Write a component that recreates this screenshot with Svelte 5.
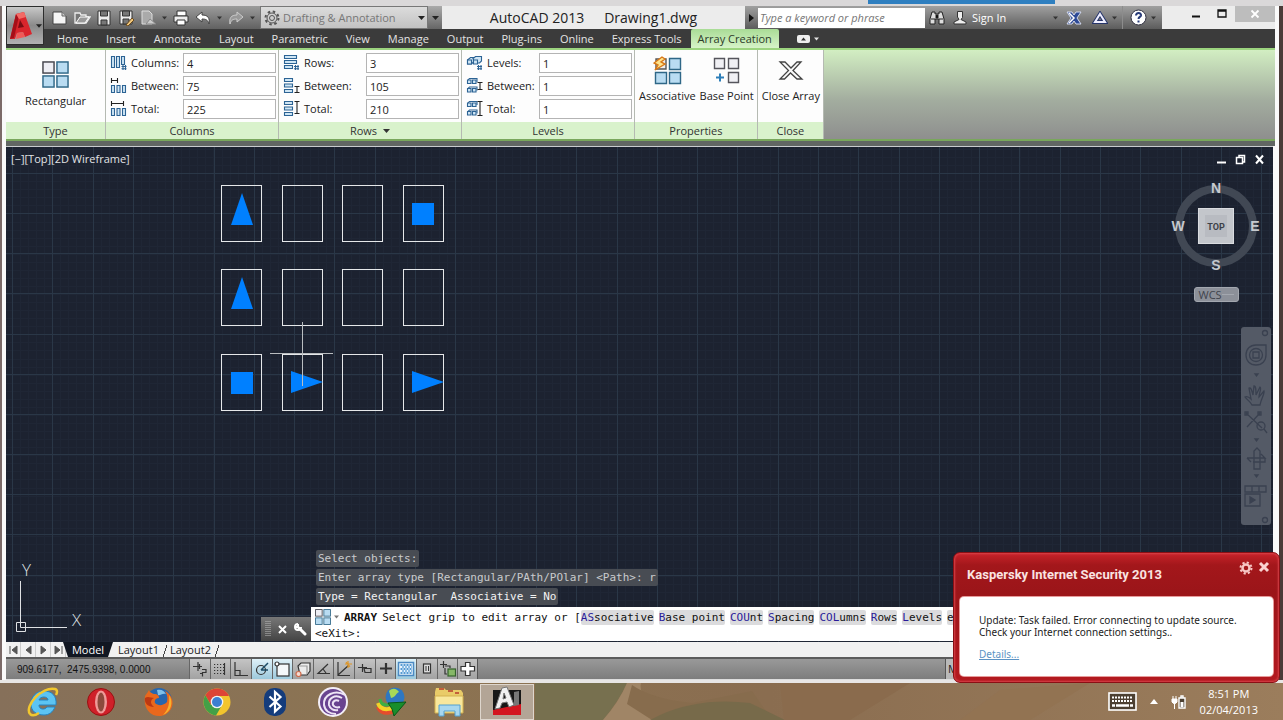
<script lang="ts">
  const tabs = ['Home', 'Insert', 'Annotate', 'Layout', 'Parametric', 'View', 'Manage', 'Output', 'Plug-ins', 'Online', 'Express Tools', 'Array Creation'];

  const panels = [
    {
      title: 'Columns', kind: 'col', menu: false,
      fields: [['Columns:', '4'], ['Between:', '75'], ['Total:', '225']],
    },
    {
      title: 'Rows', kind: 'row', menu: true,
      fields: [['Rows:', '3'], ['Between:', '105'], ['Total:', '210']],
    },
    {
      title: 'Levels', kind: 'lev', menu: false,
      fields: [['Levels:', '1'], ['Between:', '1'], ['Total:', '1']],
    },
  ];

  // grid of the model space
  const step = 40.3;
  const major = Array.from({ length: 60 }, (_, i) => Math.round(6 + i * step) + 0.5);
  const majorY = Array.from({ length: 40 }, (_, i) => Math.round(26 + i * 40.15) + 0.5);
  const minor = Array.from({ length: 300 }, (_, i) => Math.round(6 + (i * step) / 5) + 0.5);
  const minorY = Array.from({ length: 200 }, (_, i) => Math.round(2 + (i * step) / 5) + 0.5);

  const cols = [215, 276, 336, 397];
  const rows = [38, 122, 207];

  const options = [
    ['AS', 'sociative'],
    ['B', 'ase point'],
    ['COU', 'nt'],
    ['S', 'pacing'],
    ['COL', 'umns'],
    ['R', 'ows'],
    ['L', 'evels'],
    ['', 'eXit'],
  ];

  const toggles = ['Infer Constraints', 'Snap Mode', 'Ortho Mode', 'Polar Tracking', 'Object Snap', '3D Object Snap', 'Object Snap Tracking', 'Dynamic UCS', 'Dynamic Input', 'Lineweight', 'Transparency', 'Quick Properties', 'Selection Cycling', 'Annotation Monitor'];
  const active = [3, 4, 10];

  const apps = ['Internet Explorer', 'Opera', 'Firefox', 'Chrome', 'Bluetooth', 'BitTorrent', 'Download Manager', 'File Explorer', 'AutoCAD'];

  let currentTab = $state('Array Creation');
</script>

{#snippet caret()}
  <svg class="caret" width="7" height="4" viewBox="0 0 7 4"><path d="M0 0h7L3.5 4z" fill="currentColor" /></svg>
{/snippet}

{#snippet fieldIcon(kind, n)}
  <svg width="18" height="18" viewBox="0 0 18 18" fill="#cfe6f5" stroke="#2c6394" stroke-width="1.1">
    {#if kind === 'col'}
      {#if n === 0}
        <path d="M1.5 2.5h3v11h-3zM6.5 2.5h3v11h-3zM11.5 2.5h3v8h-3z" />
        <path d="M13 11v5M15.5 11v5M11.5 12.5h5M11.5 14.8h5" fill="none" />
      {:else}
        <path d="M1.5 8.500h3v7h-3zM7 8.500h3v7h-3zM12.500 8.500h3v7h-3z" />
        {#if n === 1}
          <path d="M1.500 1v5M7.500 1v5M2 3.500h5" stroke="#222" fill="none" />
        {:else}
          <path d="M1.500 1v5M13.500 1v5M2 3.500h11" stroke="#222" fill="none" />
        {/if}
      {/if}
    {:else if kind === 'row'}
      {#if n === 0}
        <path d="M1.500 1.500h12v3h-12zM1.500 6.500h12v3h-12zM1.500 11.500h8v3h-8z" />
        <path d="M12.500 11v5M15 11v5M11 12.500h5M11 14.800h5" fill="none" />
      {:else}
        <path d="M1.500 1.500h8v3h-8zM1.500 7h8v3h-8zM1.500 12.500h8v3h-8z" />
        {#if n === 1}
          <path d="M11.500 9.500h5M11.500 15.500h5M14 10v5" stroke="#222" fill="none" />
        {:else}
          <path d="M11.500 1.500h5M11.500 13.500h5M14 2v11" stroke="#222" fill="none" />
        {/if}
      {/if}
    {:else}
      {#if n === 0}
        <path d="M1.500 6l3-2.500h3V8l-2 2h-4zM6.500 5l3-2.500h6V7l-2 2h-3" />
        <path d="M1.500 6h4v4h-4zM7.500 6h4v4h-4z" />
        <path d="M12.500 11v5M15 11v5M11 12.500h5M11 14.800h5" fill="none" />
      {:else}
        <path d="M1.500 3h3.500v3.500h-3.500zM6.500 3h3.500v3.500h-3.500zM1.500 11.500h3.500v3.500h-3.500zM6.500 11.500h3.500v3.500h-3.500z" />
        <path d="M2 2.800L3.500 1.500h7.500V5M2 11.300L3.500 10h7.500v3.500" fill="none" />
        {#if n === 1}
          <path d="M11.500 5.500h5M11.500 12.500h5M14 6v6" stroke="#222" fill="none" />
        {:else}
          <path d="M11.500 1.500h5M11.500 15.500h5M14 2v13" stroke="#222" fill="none" />
        {/if}
      {/if}
    {/if}
  </svg>
{/snippet}

{#snippet arrayIcon(size)}
  <svg width={size} height={size} viewBox="0 0 28 28" fill="#b9dcf2" stroke="#2f6787" stroke-width="1.500">
    <rect x="1" y="1" width="11.500" height="11.500" fill="#eeeef4" stroke="#44444c" />
    <rect x="15.500" y="1" width="11.500" height="11.500" />
    <rect x="1" y="15.500" width="11.500" height="11.500" />
    <rect x="15.500" y="15.500" width="11.500" height="11.500" />
  </svg>
{/snippet}

{#snippet toggleIcon(n)}
  <svg width="18" height="18" viewBox="0 0 18 18" fill="none" stroke="#333" stroke-width="1.200">
    {#if n === 0}
      <path d="M2 6.500h9M7 2v9M8.500 4v5M11 9.500h4v3h-3.500v4M9 13.500h2" />
    {:else if n === 1}
      <path d="M3 4.500h12M3 7.500h12M3 10.500h12M3 13.500h12" stroke-dasharray="1.200 1.800" />
      <path d="M13.500 3v12" />
    {:else if n === 2}
      <path d="M3 2v13.500h13M3 10.500h5v5" />
    {:else if n === 3}
      <circle cx="8" cy="10" r="4.500" />
      <path d="M8 10h7M8 10L15 3" stroke="#1c4b66" stroke-width="1.500" />
    {:else if n === 4}
      <rect x="4" y="4" width="12" height="12" fill="#f4f8fa" />
      <circle cx="4" cy="4" r="2" fill="#fff" />
    {:else if n === 5}
      <path d="M4 6l3-3h9v8l-3 4H6z" fill="#ececec" />
      <path d="M5 6h8v8" stroke="#999" />
      <circle cx="4.500" cy="14" r="2.500" stroke="#cf6c4d" fill="#f3dbd3" />
    {:else if n === 6}
      <path d="M13 4L3 13.500h12M8 9l3 4" />
    {:else if n === 7}
      <path d="M3 2v13.500h12M3 15L14 5" />
      <path d="M13 1v7M10 4h7M11 2l4 5" stroke="#df9524" />
    {:else if n === 8}
      <path d="M2 7.500h9M6.500 4v8M8 8.500h7v4H9z" />
    {:else if n === 9}
      <path d="M3 8.500h12M9 3v11" stroke-width="2.200" />
    {:else if n === 10}
      <rect x="1.500" y="2.500" width="15" height="13" fill="#eaf5fd" stroke="#4b8ac3" stroke-width="1.500" />
      <path d="M3.500 5h11M3.500 9h11M3.500 13h11" stroke="#559ad3" stroke-width="2" stroke-dasharray="2 1" />
      <path d="M5 7h10M5 11h10" stroke="#8cbde4" stroke-width="2" stroke-dasharray="2 1" />
    {:else if n === 11}
      <rect x="5.500" y="4" width="7" height="9" fill="#ddd" />
      <path d="M8 6v5M10.500 6v5" stroke-width="1" />
    {:else if n === 12}
      <path d="M1 4.500h7M4.500 1v7M6 6h5v2M6 8v6h2" />
      <rect x="9" y="9" width="7.500" height="7" fill="#86b867" stroke="#35612c" />
    {:else}
      <path d="M6.500 2.500h4.500v4h4.500v4.500H11v4.500H6.500V11H2V6.500h4.500z" fill="#fff" />
    {/if}
  </svg>
{/snippet}

{#snippet appIcon(n)}
  <svg width="32" height="32" viewBox="0 0 32 32">
    {#if n === 0}
      <path d="M17 5C9 5 4 11 4 18s5 11 13 11c5 0 9-3 11-8h-8c-2 3-8 3-8-2h17C30 10 25 5 17 5zM12 14c1-4 9-4 9 0z" fill="#5cc4f3" stroke="#2384c4" fill-rule="evenodd" />
      <path d="M3 28C-3 20 15 0 28 3c3 1 2 4 1 6M3 28c2 2 6 1 9-1" fill="none" stroke="#f1c72f" stroke-width="2.500" />
    {:else if n === 1}
      <circle cx="16" cy="16" r="13.500" fill="#cf2029" stroke="#911" />
      <ellipse cx="16" cy="16" rx="6" ry="11.500" fill="#ef9a98" />
      <ellipse cx="16" cy="16" rx="3.500" ry="9.500" fill="#8c4a3c" />
    {:else if n === 2}
      <circle cx="16" cy="15" r="13" fill="#2766ad" />
      <path d="M14 4c5-1 7 1 9 4-4-1-6 2-8 1z" fill="#80c0e8" />
      <path d="M2 10C4 7 5 6 6 4c1 3 3 3 5 4 4 0 5 2 5 4-3 0-5 2-4 5 3 3 8 3 12-1 1-5 0-8-2-11 12 6 9 23-4 25C7 31 0 22 2 10z" fill="#e9681c" />
      <path d="M26 9c5 7 2 17-6 20 5-5 7-11 6-20z" fill="#f7b12e" />
      <path d="M2 12c3-2 6 0 9 0-4 2-4 6 0 9-6 0-10-4-9-9z" fill="#bd3812" />
    {:else if n === 3}
      <circle cx="16" cy="16" r="13.500" fill="#f2c52e" />
      <path d="M4.300 9.300A13.500 13.500 0 0 1 28 10H16l-6 9z" fill="#dd4436" />
      <path d="M4.300 9.300A13.500 13.500 0 0 0 15 29.500L21 19l-11 0z" fill="#43a047" />
      <circle cx="16" cy="16" r="6.300" fill="#f3f3f3" />
      <circle cx="16" cy="16" r="5" fill="#3d7fd2" />
    {:else if n === 4}
      <rect x="5" y="2" width="22" height="28" rx="10" fill="#143c7c" />
      <path d="M10.500 10.500l11 10-5.500 5V6l5.500 5-11 10" fill="none" stroke="#fff" stroke-width="2.200" />
    {:else if n === 5}
      <circle cx="16" cy="16" r="15" fill="#f3eef7" />
      <circle cx="16" cy="16" r="13" fill="#694390" />
      <path d="M28 9C18 3 6 9 7 19c1 6 6 9 12 9M25 12c-7-4-14 0-13 7 1 4 5 6 9 5M22 15c-4-2-7 1-6 4 1 2 4 3 7 2" fill="none" stroke="#ede4f5" stroke-width="2" />
    {:else if n === 6}
      <path d="M3 21c3 8 16 8 22-2" fill="none" stroke="#e44d2c" stroke-width="4" />
      <path d="M3 17c3 9 15 8 22-2" fill="none" stroke="#f3d327" stroke-width="4" />
      <path d="M5 13c1 9 13 7 20-1" fill="none" stroke="#3daf42" stroke-width="3" />
      <circle cx="20" cy="11" r="9.500" fill="#2e77c1" />
      <path d="M14 5c4-4 8-2 10 1-3 1-3 5-8 6z" fill="#a8d957" />
      <path d="M13 17l18-1-12 14-2-7z" fill="#188e2c" stroke="#075816" />
    {:else if n === 7}
      <path d="M2 6l1-4h8l2 2h15l2 3v20H2z" fill="#e9cb68" />
      <path d="M6 3h5M15 5h5M22 7h4" stroke="#b63d2c" stroke-width="1.500" />
      <path d="M2 10h28v17H2z" fill="#f8e79c" stroke="#d3b14e" />
      <path d="M6 30V19h21v11h-5v-5H11v5z" fill="#a7d7ef" stroke="#52a0d0" />
    {:else}
      <path d="M2 4h28v25H2z" fill="#181818" />
      <path d="M2 24l28-6v11H2z" fill="#d31620" />
      <path d="M23 6l5-1v14l-5 1z" fill="#777" />
      <path d="M4 23L11 2l5-1 7 18-5 2-2-5-5 1-2 5zM12 13l3-1-2-5z" fill="#f1f1f1" stroke="#777" fill-rule="evenodd" />
    {/if}
  </svg>
{/snippet}

<div class="desktop">
  <div class="peek"></div>
  <div class="window">
    <header>
      <button class="app-button" aria-label="Application menu">
        <svg width="24" height="30" viewBox="0 0 24 30">
          <path d="M1 28L7 3l8-2 8 22-7 3-2-5-6 1-2 6z" fill="#d9252c" />
          <path d="M1 28L7 3l3 2-5 22z" fill="#a50f18" />
          <path d="M7 3l8-2 2 5-7 2z" fill="#f26a65" />
          <path d="M9 17l2-8 4 7z" fill="#7b0c13" />
          <path d="M8 22l6-1 2 5-9 2z" fill="#f05a57" />
        </svg>
        {@render caret()}
      </button>
      <div class="header-rows">
        <div class="titlebar">
          <div class="quick">
            <button aria-label="New"><svg width="18" height="16" viewBox="0 0 18 16"><path d="M2 2h9l4 4v8H2z" fill="#f5f5f5" stroke="#444" /><path d="M11 2v4h4" fill="#ccc" stroke="#666" /></svg></button>
            <button aria-label="Open"><svg width="18" height="16" viewBox="0 0 18 16"><path d="M2 13V3h5l1 2h5v2h4l-4 6z" fill="#777" stroke="#eee" stroke-width="1.300" /><path d="M3 13l4-6h9l-4 6z" fill="#999" stroke="#fff" /></svg></button>
            <button aria-label="Save"><svg width="18" height="16" viewBox="0 0 18 16"><path d="M3 1h12v14H3z" fill="#ececec" stroke="#333" /><path d="M5.500 1h7v5h-7zM6 10h6v5H6z" fill="#777" stroke="#333" /></svg></button>
            <button aria-label="Save As"><svg width="18" height="16" viewBox="0 0 18 16"><path d="M3 1h12v13H3z" fill="#ececec" stroke="#333" /><path d="M5.500 1h7v5h-7zM6 9h6v5H6z" fill="#777" stroke="#333" /><path d="M9 15l6-7 2 2-6 6z" fill="#f1c77c" stroke="#6b4b1e" /></svg></button>
            <button aria-label="Plot Preview"><svg width="18" height="16" viewBox="0 0 18 16"><path d="M3 1h7l3 3v10H3z" fill="#aaa" stroke="#ddd" /><path d="M7 14l4-5 6 5z" fill="#ccc" stroke="#888" /></svg></button>
            <button class="mini" aria-label="More">{@render caret()}</button>
            <button aria-label="Print"><svg width="18" height="16" viewBox="0 0 18 16"><path d="M5 1h9v5H5z" fill="#fff" stroke="#333" /><path d="M2 6h14v6H2z" fill="#eee" stroke="#333" /><path d="M5 10h8v5H5z" fill="#fff" stroke="#333" /></svg></button>
            <button aria-label="Undo"><svg width="18" height="16" viewBox="0 0 18 16"><path d="M2 7l6-5v3c6 0 8 3 7 9-1-4-3-5-7-5v3z" fill="#fff" stroke="#444" /></svg></button>
            <button class="mini" aria-label="Undo list">{@render caret()}</button>
            <button aria-label="Redo"><svg width="18" height="16" viewBox="0 0 18 16"><path d="M16 7l-6-5v3C4 5 2 8 3 14c1-4 3-5 7-5v3z" fill="#999" stroke="#ccc" /></svg></button>
            <button class="mini" aria-label="Redo list">{@render caret()}</button>
          </div>
          <div class="workspace">
            <svg width="16" height="16" viewBox="0 0 16 16" fill="none" stroke="#555"><circle cx="8" cy="8" r="2.500" /><circle cx="8" cy="8" r="5" /><circle cx="8" cy="8" r="6.500" stroke-width="2" stroke-dasharray="2.500 2.600" /></svg>
            <select aria-label="Workspace"><option>Drafting &amp; Annotation</option></select>
            {@render caret()}
          </div>
          <button class="customize" aria-label="Customize toolbar">{@render caret()}</button>
          <h1><span>AutoCAD 2013</span><span>Drawing1.dwg</span></h1>
          <div class="info">
            <button class="expand" aria-label="Collapse search"><svg width="5" height="8" viewBox="0 0 5 8"><path d="M0 0v8l5-4z" fill="#111" /></svg></button>
            <input type="search" aria-label="Search help" placeholder="Type a keyword or phrase" />
            <button aria-label="Search"><svg width="16" height="16" viewBox="0 0 16 16"><path d="M3 2h3v2h4V2h3l2 7v5h-5V9H6v5H1V9z" fill="#ddd" stroke="#222" /><path d="M2 9h4M10 9h4M7 5h2v3H7z" stroke="#222" /></svg></button>
            <button class="sign-in">
              <svg width="14" height="16" viewBox="0 0 14 16"><path d="M4.500 1.500h5v6L8 9.500l5 2.500v2H1v-2l5-2.500L4.500 7z" fill="#eee" stroke="#333" /></svg>
              Sign In
              {@render caret()}
            </button>
            <button aria-label="Exchange"><svg width="16" height="14" viewBox="0 0 16 14"><path d="M1 1h5l2 3 2-3h5l-4 6 4 6h-5l-2-3-2 3H1l4-6z" fill="#2e4a96" stroke="#d3d9ee" /><path d="M3 2l5 5-5 5" fill="none" stroke="#fff" stroke-width="1.500" /></svg></button>
            <button class="pair" aria-label="Autodesk 360"><svg width="16" height="14" viewBox="0 0 16 14"><path d="M8 3l5 8H3z" fill="none" stroke="#26356b" stroke-width="4" /><path d="M8 3l5 8H3z" fill="none" stroke="#eef" stroke-width="2" /></svg>{@render caret()}</button>
            <button class="pair help" aria-label="Help"><svg width="17" height="17" viewBox="0 0 17 17"><circle cx="8.500" cy="8.500" r="7.500" fill="#fff" stroke="#334" /><path d="M6 6.500c0-3.500 5.500-3 5 0-.3 1.500-2.500 1.500-2.500 3.500M8.500 11.500v2" fill="none" stroke="#273a78" stroke-width="2" /></svg>{@render caret()}</button>
          </div>
          <div class="window-buttons">
            <button aria-label="Minimize"><svg width="10" height="10" viewBox="0 0 10 10"><path d="M1 7.500h8" stroke="#111" stroke-width="2" /></svg></button>
            <button aria-label="Maximize"><svg width="10" height="10" viewBox="0 0 10 10"><path d="M1 1h8v7H1zM1 2h8" fill="none" stroke="#111" stroke-width="1.300" /></svg></button>
            <button class="close" aria-label="Close"><svg width="10" height="10" viewBox="0 0 10 10"><path d="M1.500 1.500l7 7M8.500 1.500l-7 7" stroke="#fff" stroke-width="1.800" /></svg></button>
          </div>
        </div>
        <nav class="tabs">
          {#each tabs as tab}
            <button class:current={tab === currentTab} onclick={() => (currentTab = tab)}>{tab}</button>
          {/each}
          <button class="ribbon-toggle" aria-label="Minimize ribbon">
            <svg width="13" height="8" viewBox="0 0 13 8"><rect x="0" y="0" width="13" height="8" rx="2" fill="#eee" /><path d="M4 5.500h5L6.500 2.500z" fill="#333" /></svg>
            {@render caret()}
          </button>
        </nav>
      </div>
    </header>

    <section class="ribbon">
      <div class="panel type">
        <div class="body">
          <button class="big">{@render arrayIcon(27)}<span>Rectangular</span></button>
        </div>
        <h2>Type</h2>
      </div>
      {#each panels as panel}
        <div class="panel {panel.kind}">
          <div class="body fields">
            {#each panel.fields as [label, value], n}
              <div class="field">
                {@render fieldIcon(panel.kind, n)}
                <label for="{panel.kind}-{n}">{label}</label>
                <input id="{panel.kind}-{n}" type="text" {value} />
              </div>
            {/each}
          </div>
          <h2>{panel.title}{#if panel.menu}{@render caret()}{/if}</h2>
        </div>
      {/each}
      <div class="panel">
        <div class="body high">
          <button class="big">
            <svg width="29" height="29" viewBox="0 0 29 29" fill="#b9dcf2" stroke="#2f6787" stroke-width="1.400"><path d="M3 3h10v10H3z" fill="#eee" stroke="#555" /><path d="M16.500 2.500h11v11h-11zM2.500 16.500h11v11h-11zM16.500 16.500h11v11h-11z" /><path d="M9 1L1 7l4 2-3 5 10-6-4-2 4-3z" fill="#ffe48c" stroke="#d87818" /></svg>
            <span>Associative</span>
          </button>
          <button class="big">
            <svg width="29" height="29" viewBox="0 0 29 29" fill="#f0f0f4" stroke="#55555c" stroke-width="1.400"><path d="M2.500 2.500h10v10h-10zM16.500 2.500h10v10h-10zM16.500 16.500h10v10h-10z" /><path d="M8 17.500v8M4 21.500h8" stroke="#2e7fb9" stroke-width="2" /></svg>
            <span>Base Point</span>
          </button>
        </div>
        <h2>Properties</h2>
      </div>
      <div class="panel">
        <div class="body high">
          <button class="big">
            <svg width="29" height="29" viewBox="0 0 29 29"><path d="M4 6h5l6 6 6-6h4l-8 8.500 9 8.500h-5l-6.500-6-6 6H4l8.500-8.500z" fill="#fafafa" stroke="#444" stroke-width="1.300" /></svg>
            <span>Close Array</span>
          </button>
        </div>
        <h2>Close</h2>
      </div>
    </section>

    <main>
      <svg class="drawing" width="100%" height="100%" shape-rendering="crispEdges">
        <g stroke="#1f2635">
          {#each minor as x}<path d="M{x} 0V2000" />{/each}
          {#each minorY as y}<path d="M0 {y}H4000" />{/each}
        </g>
        <g stroke="#2a3747">
          {#each major as x}<path d="M{x} 0V2000" />{/each}
          {#each majorY as y}<path d="M0 {y}H4000" />{/each}
        </g>
        <g fill="none" stroke="#e6e8ea">
          {#each rows as y}
            {#each cols as x}<rect x={x + 0.5} y={y + 0.5} width="40" height="56" />{/each}
          {/each}
        </g>
        <g fill="#0080ff">
          <path d="M236 46l11 32h-22z" shape-rendering="auto" />
          <path d="M236 130l11 32h-22z" shape-rendering="auto" />
          <path d="M285 224l32 11-32 11z" shape-rendering="auto" />
          <path d="M406 224l32 11-32 11z" shape-rendering="auto" />
          <rect x="406" y="56" width="22" height="22" />
          <rect x="225" y="225" width="22" height="22" />
        </g>
        <path d="M264 206.500h63M296.500 175v64" stroke="#b9bdc0" />
      </svg>

      <div class="view-label"><button>[−]</button><button>[Top]</button><button>[2D Wireframe]</button></div>

      <div class="view-buttons">
        <button aria-label="Minimize drawing"><svg width="11" height="11" viewBox="0 0 11 11"><path d="M1 8.500h9" stroke="#fff" stroke-width="2" /></svg></button>
        <button aria-label="Restore drawing"><svg width="11" height="11" viewBox="0 0 11 11"><path d="M1.500 3.500h6v6h-6zM4 3V1.500h5.500V8H8" fill="none" stroke="#fff" stroke-width="1.500" /></svg></button>
        <button aria-label="Close drawing"><svg width="11" height="11" viewBox="0 0 11 11"><path d="M2 1.500l7 8M9 1.500l-7 8" stroke="#fff" stroke-width="2" /></svg></button>
      </div>

      <div class="viewcube">
        <svg width="96" height="96" viewBox="0 0 96 96" font-family="Liberation Sans, Arial, sans-serif" font-weight="bold" text-anchor="middle">
          <circle cx="48" cy="48" r="37" fill="none" stroke="#414854" stroke-width="8" />
          <rect x="30.500" y="30.500" width="35" height="35" fill="#c3c6cb" stroke="#dadce0" />
          <rect x="37" y="37" width="22" height="22" fill="#b8bbc1" />
          <g fill="#c5c9ce" font-size="14">
            <text x="48" y="15">N</text>
            <text x="48" y="92">S</text>
            <text x="10" y="53">W</text>
            <text x="87" y="53">E</text>
          </g>
          <text x="48" y="52" font-size="9" fill="#3d4148" font-family="Roboto, sans-serif">TOP</text>
        </svg>
        <button class="wcs">WCS<svg width="12" height="4" viewBox="0 0 12 4"><path d="M0 1.500h12" stroke="#a3a7af" /></svg></button>
      </div>

      <div class="navbar">
        <svg width="30" height="198" viewBox="0 0 30 198" fill="none" stroke="#3a4150" stroke-width="1.300">
          <circle cx="24" cy="6" r="2.500" />
          <path d="M15 18h10v10c0 6-4 10-10 10S5 34 5 28s4-10 10-10z" /><circle cx="15" cy="28" r="6.500" /><path d="M12 25h6v6h-6z" />
          <path d="M14 47h3l-1.500 2z" fill="#3a4150" />
          <path d="M11 78c-2-4-5-5-7-8 2-1 4 0 6 2L8 61c2-1 3 3 4 7l1-9c2 0 2 4 2 9l4-8c2 1-1 6-1 10l5-6c1 2-3 8-4 14z" />
          <path d="M5 86l16 15M19 86L6 100M4 85h3v3H4zM17 85h3v3h-3z" /><circle cx="20" cy="99" r="4" /><path d="M23 102l3 4" />
          <path d="M14 112h3l-1.500 2zM14 148h3l-1.500 2z" fill="#3a4150" />
          <path d="M13 142v-18l3-3 3 3v18zM6 131h18l-4-4M6 131l4 4M24 131v4H12" />
          <path d="M4 159h21v6H4zM11 159v6M18 159v6M4 167h15v12H4z" /><path d="M9 170v6l5-3z" fill="#3a4150" />
          <circle cx="24" cy="193" r="2.500" />
        </svg>
      </div>

      <svg class="ucs" width="72" height="82" viewBox="0 -10 72 82" fill="none" stroke="#dfe1e4">
        <path d="M6.500 17v46.500H53M2.500 58.500h9v9h-9z" />
        <g fill="#dfe1e4" stroke="none" font-family="Open Sans, sans-serif" font-weight="300" font-size="17">
          <text x="8" y="12">Y</text>
          <text x="58" y="62">X</text>
        </g>
      </svg>

      <div class="command">
        <div class="history">
          <p>Select objects:</p>
          <p>Enter array type [Rectangular/PAth/POlar] &lt;Path&gt;: r</p>
          <p class="latest">Type = Rectangular&nbsp; Associative = No</p>
        </div>
        <div class="prompt-row">
          <div class="handle">
            <svg width="6" height="16" viewBox="0 0 6 16"><path d="M1 0v16M5 0v16M3 0v16" stroke="#bbb" stroke-dasharray="1 1" /></svg>
            <button aria-label="Close command line"><svg width="9" height="9" viewBox="0 0 9 9"><path d="M1 1l7 7M8 1L1 8" stroke="#fff" stroke-width="2" /></svg></button>
            <button aria-label="Customize"><svg width="13" height="13" viewBox="0 0 13 13"><path d="M5 5l6 6" stroke="#fff" stroke-width="3" stroke-linecap="round" /><path d="M4 1a3 3 0 1 0 3 3M1 4l3 0 0-3" fill="none" stroke="#fff" stroke-width="2" /></svg></button>
          </div>
          <div class="prompt">
            <div class="line">
              <button class="recent" aria-label="Recent commands">{@render arrayIcon(16)}{@render caret()}</button>
              <b>ARRAY</b>
              <span>Select grip to edit array or [</span>
              <span class="options">
                {#each options as [key, rest]}<button><em>{key}</em>{rest}</button>{/each}
              </span>
            </div>
            <div class="line">&lt;eXit&gt;:</div>
          </div>
        </div>
      </div>
    </main>

    <nav class="layouts">
      {#each ['M2 1v8M9 1v8L4 5z', 'M8 1v8L3 5z', 'M3 1v8l5-4z', 'M9 1v8M2 1v8l5-4z'] as d}
        <button class="step" aria-label="Scroll layouts"><svg width="11" height="10" viewBox="0 0 11 10"><path {d} fill="#555" stroke="#555" /></svg></button>
      {/each}
      <button class="model">Model</button>
      <button class="sheet">Layout1</button>
      <button class="sheet">Layout2</button>
    </nav>

    <footer>
      <div class="coords">909.6177,&nbsp; 2475.9398, 0.0000</div>
      <div class="toggles">
        {#each toggles as name, n}
          <button class:on={active.includes(n)} aria-label={name}>{@render toggleIcon(n)}</button>
        {/each}
      </div>
      <button class="space">MODEL</button>
    </footer>
  </div>

  <div class="taskbar">
    <svg class="wallpaper" width="100%" height="100%" viewBox="0 0 1283 37" preserveAspectRatio="none">
      <path d="M535 0h92q-8 18-24 37h-68z" fill="#77704f" />
      <path d="M627 0h14q-4 14 24 24l-12 13h-50q16-18 24-37z" fill="#a08566" />
      <path d="M632 2q20 14 60 18l60-12 20 29h-120l-25-16z" fill="#876c4d" />
      <path d="M660 32q40-18 90-12l35 17H650z" fill="#776a4a" />
      <path d="M780 0h130l-60 37h-66z" fill="#8a6b4d" />
      <path d="M960 37l40-30 90-7-60 37z" fill="#927352" />
    </svg>
    <div class="apps">
      {#each apps as app, n}
        <button class:running={app === 'AutoCAD'} aria-label={app}>{@render appIcon(n)}</button>
      {/each}
    </div>
    <div class="tray">
      <button aria-label="Touch keyboard"><svg width="29" height="19" viewBox="0 0 29 19"><rect x="1" y="1" width="27" height="17" fill="#4c4032" stroke="#fff" stroke-width="1.600" /><path d="M4 5.500h21M4 9h21" stroke="#fff" stroke-width="2" stroke-dasharray="2 1" /><path d="M4 13.500h3M8 13.500h13M22 13.500h3" stroke="#fff" stroke-width="2.500" /></svg></button>
      <button aria-label="Show hidden icons"><svg width="8" height="5" viewBox="0 0 8 5"><path d="M0 5h8L4 0z" fill="#fff" /></svg></button>
      <button aria-label="Power"><svg width="16" height="16" viewBox="0 0 16 16"><path d="M8 4h6v10H8zM10 2h2v2h-2z" fill="#4c4032" stroke="#fff" stroke-width="1.400" /><path d="M9.500 8h3v5h-3z" fill="#fff" /><path d="M1 5h5v3l-1.500 1.500h-2L1 8zM2 2v3M5 2v3M3.500 9v6" fill="#fff" stroke="#fff" /></svg></button>
      <div class="clock"><span>8:51 PM</span><span>02/04/2013</span></div>
    </div>
  </div>

  <aside class="alert">
    <div class="alert-head">
      <h3>Kaspersky Internet Security 2013</h3>
      <button aria-label="Settings"><svg width="14" height="14" viewBox="0 0 14 14" fill="none" stroke="#f7c6c4"><circle cx="7" cy="7" r="3.500" stroke-width="2.500" /><circle cx="7" cy="7" r="5.500" stroke-width="2" stroke-dasharray="2.200 2.120" /></svg></button>
      <button aria-label="Dismiss"><svg width="12" height="12" viewBox="0 0 12 12"><path d="M2 2l8 8M10 2l-8 8" stroke="#f9d2d0" stroke-width="3" /></svg></button>
    </div>
    <div class="alert-body">
      <p>Update: Task failed. Error connecting to update source.<br />Check your Internet connection settings..</p>
      <a href="#details">Details...</a>
    </div>
  </aside>
</div>

<style>
  :global(body) {
    margin: 0;
    background: #dcd9da;
  }
  .desktop {
    position: relative;
    display: flex;
    flex-direction: column;
    min-height: 100vh;
    overflow: hidden;
    font: 11px/14px "Open Sans", "Noto Sans", sans-serif;
    color: #222;
    background: linear-gradient(90deg, #7b6a68 2px, #fafafa 2px, #fafafa calc(100% - 4px), #4a3b38 calc(100% - 4px));
  }
  .desktop * {
    box-sizing: border-box;
  }
  h1, h2, h3, p {
    margin: 0;
    font: inherit;
  }
  button, input, select {
    margin: 0;
    padding: 0;
    border: 0;
    background: none;
    color: inherit;
    font: inherit;
  }
  button {
    display: flex;
    align-items: center;
    justify-content: center;
    white-space: nowrap;
  }
  svg {
    display: block;
    flex: none;
  }
  .peek {
    height: 6px;
    background: linear-gradient(90deg, transparent 868px, #2f7fc0 868px, #2f7fc0 1055px, transparent 1055px) 0 0 / 100% 4px no-repeat, #dad8d9;
  }
  .window {
    flex: 1;
    display: flex;
    flex-direction: column;
    margin: 0 8px 0 6px;
    min-width: 0;
  }

  header {
    display: flex;
    background: #3b3b3b;
  }
  .app-button {
    width: 38px;
    height: 39px;
    gap: 3px;
    border: 1px solid #2d2d2d;
    background: linear-gradient(#c8c8c8, #8a8a8a 50%, #b2b2b2);
  }
  .app-button .caret {
    width: 6px;
  }
  .header-rows {
    flex: 1;
    min-width: 0;
  }
  .titlebar {
    display: flex;
    height: 23px;
    background: #ececec;
  }
  .quick {
    display: flex;
    align-items: center;
    padding: 0 2px 0 5px;
    background: linear-gradient(#9c9c9c, #616161);
    color: #333;
  }
  .quick button {
    width: 22px;
  }
  .quick .mini {
    width: 11px;
  }
  .quick .mini .caret {
    width: 5px;
  }
  .workspace {
    display: flex;
    align-items: center;
    gap: 3px;
    width: 168px;
    padding: 0 2px 0 3px;
    border: 1px solid #777;
    background: linear-gradient(#dcdcdc, #c2c2c2);
  }
  .workspace select {
    flex: 1;
    min-width: 0;
    appearance: none;
    color: #777;
  }
  .customize {
    width: 14px;
    background: linear-gradient(#aaa, #666);
  }
  h1 {
    flex: 1;
    display: flex;
    align-items: center;
    justify-content: center;
    gap: 20px;
    font-size: 14px;
    color: #222;
    white-space: nowrap;
  }
  .info {
    display: flex;
    align-items: center;
    width: 417px;
    background: linear-gradient(#a0a0a0, #5c5c5c);
  }
  .info button {
    height: 100%;
    width: 24px;
  }
  .info .expand {
    width: 13px;
  }
  .info input {
    flex: 1;
    min-width: 0;
    height: 20px;
    padding: 0 2px;
    background: #fff;
    font-style: italic;
  }
  .info .sign-in {
    width: 113px;
    gap: 5px;
    justify-content: flex-start;
    padding: 0 4px;
    color: #fff;
  }
  .sign-in .caret {
    margin-left: auto;
    color: #333;
    width: 5px;
  }
  .info .pair {
    width: 36px;
    gap: 4px;
    color: #333;
  }
  .pair .caret {
    width: 5px;
  }
  .info .help {
    width: 40px;
    border-left: 1px solid #8c8c8c;
  }
  .window-buttons {
    display: flex;
    justify-content: flex-end;
    align-items: flex-start;
    width: 113px;
  }
  .window-buttons button {
    width: 26px;
    height: 16px;
  }
  .window-buttons .close {
    width: 40px;
    background: #bdbdbd;
  }
  .tabs {
    display: flex;
    height: 19px;
    padding-left: 4px;
  }
  .tabs button {
    padding: 0 9px;
    color: #e4e4e4;
  }
  .tabs .current {
    padding: 0 7px;
    border-radius: 2px 2px 0 0;
    background: linear-gradient(#a9dc96, #d6f3c8);
    color: #2c3a28;
  }
  .tabs .ribbon-toggle {
    gap: 4px;
    padding: 0 18px;
  }
  .ribbon-toggle .caret {
    width: 5px;
  }

  .ribbon {
    display: flex;
    height: 98px;
    border-top: 2px solid #9cd47f;
    border-bottom: 5px solid #616663;
    background: linear-gradient(#d2eec2, #a3ad9f 55%, #8d8d8d);
    box-shadow: inset 0 -2px #79a75c;
  }
  .panel {
    display: flex;
    flex-direction: column;
    margin-bottom: 2px;
    border-right: 1px solid #b5bab2;
    background: #fdfdfd;
  }
  .panel.type {
    width: 100px;
  }
  .panel.col, .panel.lev {
    width: 173px;
  }
  .panel.row {
    width: 183px;
  }
  .body {
    flex: 1;
    display: flex;
    justify-content: center;
    align-items: center;
    padding-bottom: 4px;
  }
  .high {
    padding: 0 1px 14px 2px;
  }
  .panel h2 {
    display: flex;
    align-items: center;
    justify-content: center;
    gap: 6px;
    height: 17px;
    background: #d9f2cc;
    color: #333;
  }
  .big {
    flex-direction: column;
    gap: 6px;
    padding: 0 2px;
  }
  .high .big {
    gap: 4px;
  }
  .body.fields {
    flex-direction: column;
    align-items: stretch;
    justify-content: flex-start;
    gap: 3px;
    padding: 3px 2px 0 4px;
  }
  .field {
    display: flex;
    align-items: center;
    gap: 3px;
  }
  .field label {
    flex: 1;
  }
  .field input {
    width: 93px;
    height: 20px;
    padding: 0 3px;
    border: 1px solid #b4b4b4;
    background: #fff;
  }

  main {
    position: relative;
    flex: 1;
    margin-right: 2px;
    border-top: 1px solid #c9ccce;
    background: #1c2230;
  }
  .drawing {
    position: absolute;
    inset: 0;
  }
  .view-label {
    position: absolute;
    top: 5px;
    left: 5px;
    display: flex;
    color: #e2e4e6;
  }
  .view-buttons {
    position: absolute;
    top: 7px;
    right: 8px;
    display: flex;
    gap: 8px;
  }
  .viewcube {
    position: absolute;
    top: 31px;
    right: 9px;
    display: flex;
    flex-direction: column;
    align-items: center;
    gap: 13px;
  }
  .wcs {
    justify-content: space-between;
    width: 45px;
    height: 15px;
    padding: 0 4px;
    border: 1px solid #a3a7af;
    border-radius: 3px;
    background: #8c9099;
    color: #3f434c;
  }
  .navbar {
    position: absolute;
    top: 180px;
    right: 2px;
    border-radius: 3px;
    background: #545a66;
  }
  .ucs {
    position: absolute;
    left: 8px;
    bottom: 6px;
  }
  .command {
    position: absolute;
    left: 255px;
    right: 30px;
    bottom: 1px;
    font: 11px/17px "DejaVu Sans Mono", monospace;
  }
  .history {
    display: flex;
    flex-direction: column;
    align-items: flex-start;
    gap: 2px;
    padding: 0 0 2px 55px;
    color: #c9cbcd;
  }
  .history p {
    padding: 0 2px;
    border-radius: 2px;
    background: #484c53;
    white-space: nowrap;
  }
  .history .latest {
    color: #f2f2f2;
  }
  .prompt-row {
    display: flex;
    align-items: flex-end;
  }
  .handle {
    display: flex;
    align-items: center;
    justify-content: space-between;
    width: 50px;
    height: 24px;
    padding: 0 4px;
    background: linear-gradient(#777, #444);
  }
  .prompt {
    flex: 1;
    min-width: 0;
    height: 34px;
    overflow: hidden;
    padding: 2px 4px 0;
    background: #fff;
    color: #111;
  }
  .line {
    display: flex;
    align-items: center;
    height: 16px;
    white-space: nowrap;
  }
  .recent {
    gap: 3px;
    width: 23px;
    margin-right: 6px;
    color: #777;
  }
  .recent .caret {
    width: 5px;
  }
  .line b {
    margin-right: 5px;
  }
  .options {
    display: flex;
    gap: 5px;
  }
  .options button {
    height: 15px;
    border-radius: 2px;
    background: #dbdbdd;
  }
  .options em {
    font-style: normal;
    color: #2a1b9a;
  }

  .layouts {
    display: flex;
    height: 15px;
    background: #f1f1f1;
  }
  .layouts button {
    height: 15px;
  }
  .layouts .step {
    width: 15px;
    border-right: 1px solid #ccc;
  }
  .layouts .model {
    width: 50px;
    margin: 0 2px 0 -3px;
    clip-path: polygon(0 0, 100% 0, 90% 100%, 10% 100%);
    background: #111722;
    color: #fff;
  }
  .layouts .sheet {
    justify-content: flex-start;
    width: 52px;
    padding-left: 3px;
    background: linear-gradient(108deg, transparent 92%, #444 92%, #444 94%, transparent 94%);
  }
  footer {
    display: flex;
    height: 23px;
    border-top: 2px solid #5c5c5c;
    border-bottom: 1px solid #ddd;
    background: linear-gradient(#999, #7d7d7d);
  }
  .coords {
    width: 183px;
    padding: 4px 0 0 11px;
    font-family: "Liberation Sans", Arial, sans-serif;
    font-size: 10px;
    color: #111;
    white-space: nowrap;
  }
  .toggles {
    display: grid;
    grid-template-columns: repeat(14, 1fr);
    width: 289px;
  }
  .toggles button {
    border-left: 1px solid #666;
    background: linear-gradient(#c4c4c4, #a2a2a2);
  }
  .toggles .on {
    background: linear-gradient(#dff1f8, #9cc9dc);
  }
  .toggles button:last-child {
    border-right: 1px solid #555;
  }
  .space {
    margin-left: auto;
    width: 330px;
    padding-left: 2px;
    justify-content: flex-start;
    border-left: 1px solid #555;
    background: #b9b9b9;
  }

  .taskbar {
    position: relative;
    display: flex;
    align-items: center;
    justify-content: space-between;
    height: 40px;
    padding: 0 25px 0 16px;
    border-top: 3px solid #e8e6e5;
    background: linear-gradient(90deg, #86705a, #8c7452 30%, #8a6d50 60%, #9b7d5c);
  }
  .wallpaper {
    position: absolute;
    inset: 0;
  }
  .apps, .tray {
    position: relative;
    display: flex;
    align-items: center;
  }
  .apps {
    gap: 4px;
  }
  .apps button {
    width: 54px;
    height: 36px;
  }
  .apps .running {
    border: 1px solid #ded6cd;
    background: #b3a596;
  }
  .tray {
    gap: 13px;
    color: #fff;
  }
  .clock {
    display: flex;
    flex-direction: column;
    align-items: center;
    gap: 2px;
  }

  .alert {
    position: absolute;
    right: 3px;
    bottom: 37px;
    width: 327px;
    padding: 0 6px 6px;
    border: 1px solid #8b0f14;
    border-radius: 7px;
    background: linear-gradient(#c8232a, #a3171b 12px, #9b1519 40px, #b3191f);
    box-shadow: inset 0 0 2px 1px #d8434a;
  }
  .alert-head {
    display: flex;
    align-items: flex-start;
    gap: 5px;
    height: 44px;
    padding: 8px 3px 0 7px;
  }
  .alert-head h3 {
    flex: 1;
    padding-top: 4px;
    font: bold 13px/20px Roboto, sans-serif;
    color: #fae3e1;
  }
  .alert-body {
    height: 79px;
    padding: 17px 19px;
    border-radius: 4px;
    background: #fff;
    box-shadow: 0 0 0 1px #e79b9b;
    font-family: "Noto Sans", "Open Sans", sans-serif;
    font-size: 10px;
    line-height: 12px;
    white-space: nowrap;
  }
  .alert-body a {
    display: inline-block;
    margin-top: 10px;
    color: #5c93c4;
  }
</style>
